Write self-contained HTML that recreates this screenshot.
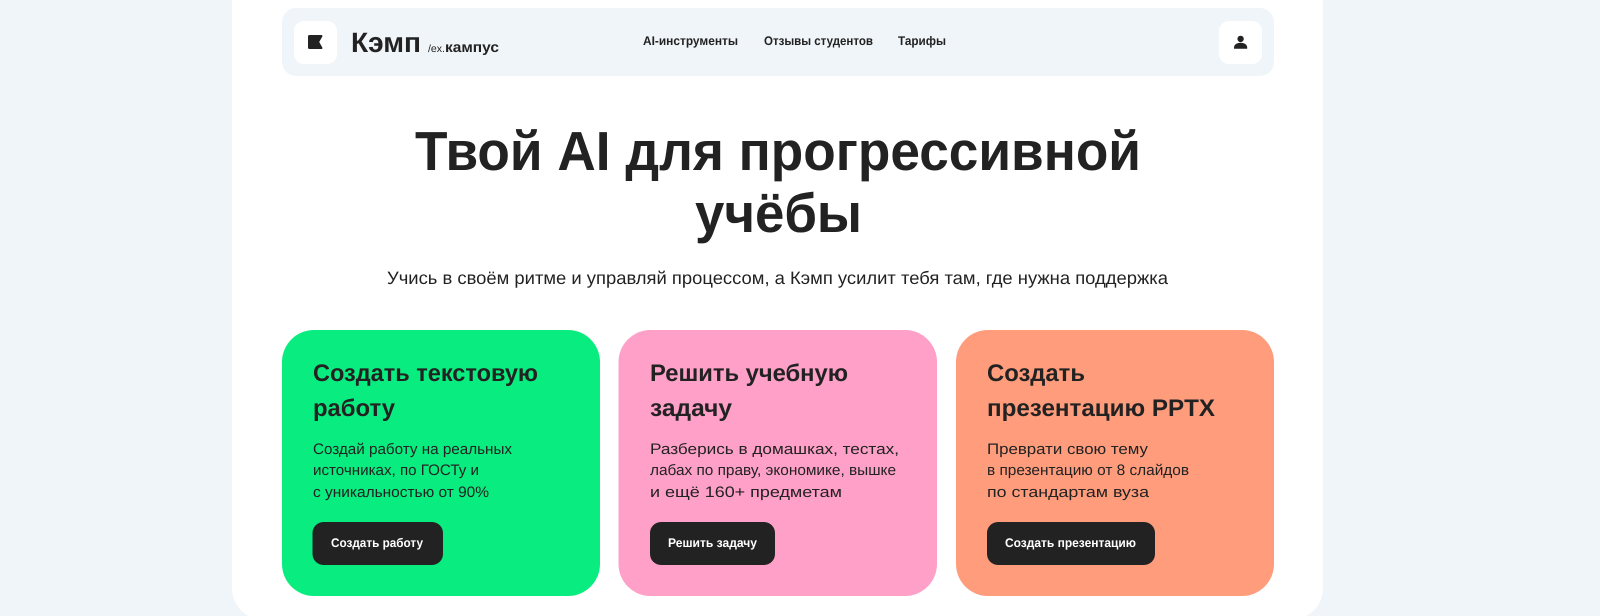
<!DOCTYPE html>
<html lang="ru">
<head>
<meta charset="utf-8">
<title>Кэмп</title>
<style>
html,body{margin:0;padding:0;width:1600px;height:616px;overflow:hidden;background:#f0f5f9}
svg{display:block;position:absolute;left:0;top:0}
text{font-family:"Liberation Sans","Noto Sans CJK SC",sans-serif;fill:#222;text-rendering:geometricPrecision}
.b{font-weight:700}
.h1{font-size:55px;font-weight:700}
.sub{font-size:18px}
.t{font-size:24px;font-weight:700}
.p{font-size:15.2px}
.btn{font-size:12.5px;fill:#fff;font-weight:700}
.nav{font-size:12.5px;font-weight:700}
</style>
</head>
<body>
<svg width="1600" height="616" viewBox="0 0 1600 616" xmlns="http://www.w3.org/2000/svg">
<rect x="0" y="0" width="1600" height="616" fill="#f0f5f9"/>
<rect x="232" y="-40" width="1091" height="660" rx="32" fill="#fff"/>
<rect x="282" y="8" width="992" height="68" rx="14" fill="#f0f5f9"/>
<rect x="294" y="21" width="43" height="43" rx="10" fill="#fff"/>
<path d="M309.500 35H321.200Q323 35 322.200 36.800L319.200 42L322.200 47.200Q323 49 321.200 49H309.500A1.500 1.500 0 0 1 308 47.500V36.500A1.500 1.500 0 0 1 309.500 35Z" fill="#222"/>
<text x="351" y="52" class="b" font-size="28" textLength="70" lengthAdjust="spacingAndGlyphs">Кэмп</text>
<text x="428" y="52" font-size="10.500" textLength="17" lengthAdjust="spacingAndGlyphs" fill="#444">/ex.</text>
<text x="445" y="52" font-size="14.500" font-weight="700" textLength="54" lengthAdjust="spacingAndGlyphs">кампус</text>
<text x="643" y="45" class="nav" textLength="95" lengthAdjust="spacingAndGlyphs">AI-инструменты</text>
<text x="764" y="45" class="nav" textLength="109" lengthAdjust="spacingAndGlyphs">Отзывы студентов</text>
<text x="898" y="45" class="nav" textLength="48" lengthAdjust="spacingAndGlyphs">Тарифы</text>
<rect x="1219" y="21" width="43" height="43" rx="10" fill="#fff"/>
<circle cx="1240.600" cy="38.900" r="3.200" fill="#222"/>
<path d="M1234 48.700V47.600C1234 44.600 1237 42.800 1240.600 42.800S1247.200 44.600 1247.200 47.600V48.700Z" fill="#222"/>

<text x="415" y="170" class="h1" textLength="726" lengthAdjust="spacingAndGlyphs">Твой AI для прогрессивной</text>
<text x="695" y="232" class="h1" textLength="167" lengthAdjust="spacingAndGlyphs">учёбы</text>
<text x="387" y="284" class="sub" textLength="781" lengthAdjust="spacingAndGlyphs">Учись в своём ритме и управляй процессом, а Кэмп усилит тебя там, где нужна поддержка</text>

<rect x="282" y="330" width="318" height="266" rx="32" fill="#09ec7f"/>
<rect x="618.500" y="330" width="318.500" height="266" rx="32" fill="#ffa0c8"/>
<rect x="956" y="330" width="318" height="266" rx="32" fill="#ff9c7c"/>

<text x="313" y="381" class="t" textLength="225" lengthAdjust="spacingAndGlyphs">Создать текстовую</text>
<text x="313" y="416" class="t" textLength="82" lengthAdjust="spacingAndGlyphs">работу</text>
<text x="313" y="454" class="p" textLength="199" lengthAdjust="spacingAndGlyphs">Создай работу на реальных</text>
<text x="313" y="475" class="p" textLength="166" lengthAdjust="spacingAndGlyphs">источниках, по ГОСТу и</text>
<text x="313" y="497" class="p" textLength="176" lengthAdjust="spacingAndGlyphs">с уникальностью от 90%</text>
<rect x="312.500" y="522" width="130.500" height="43" rx="11" fill="#222"/>
<text x="331" y="547" class="btn" textLength="92" lengthAdjust="spacingAndGlyphs">Создать работу</text>

<text x="650" y="381" class="t" textLength="198" lengthAdjust="spacingAndGlyphs">Решить учебную</text>
<text x="650" y="416" class="t" textLength="82" lengthAdjust="spacingAndGlyphs">задачу</text>
<text x="650" y="454" class="p" textLength="249" lengthAdjust="spacingAndGlyphs">Разберись в домашках, тестах,</text>
<text x="650" y="475" class="p" textLength="246" lengthAdjust="spacingAndGlyphs">лабах по праву, экономике, вышке</text>
<text x="650" y="497" class="p" textLength="192" lengthAdjust="spacingAndGlyphs">и ещё 160+ предметам</text>
<rect x="650" y="522" width="125" height="43" rx="11" fill="#222"/>
<text x="668" y="547" class="btn" textLength="89" lengthAdjust="spacingAndGlyphs">Решить задачу</text>

<text x="987" y="381" class="t" textLength="98" lengthAdjust="spacingAndGlyphs">Создать</text>
<text x="987" y="416" class="t" textLength="228" lengthAdjust="spacingAndGlyphs">презентацию PPTX</text>
<text x="987" y="454" class="p" textLength="161" lengthAdjust="spacingAndGlyphs">Преврати свою тему</text>
<text x="987" y="475" class="p" textLength="202" lengthAdjust="spacingAndGlyphs">в презентацию от 8 слайдов</text>
<text x="987" y="497" class="p" textLength="162" lengthAdjust="spacingAndGlyphs">по стандартам вуза</text>
<rect x="987" y="522" width="168" height="43" rx="11" fill="#222"/>
<text x="1005" y="547" class="btn" textLength="131" lengthAdjust="spacingAndGlyphs">Создать презентацию</text>
</svg>
</body>
</html>
